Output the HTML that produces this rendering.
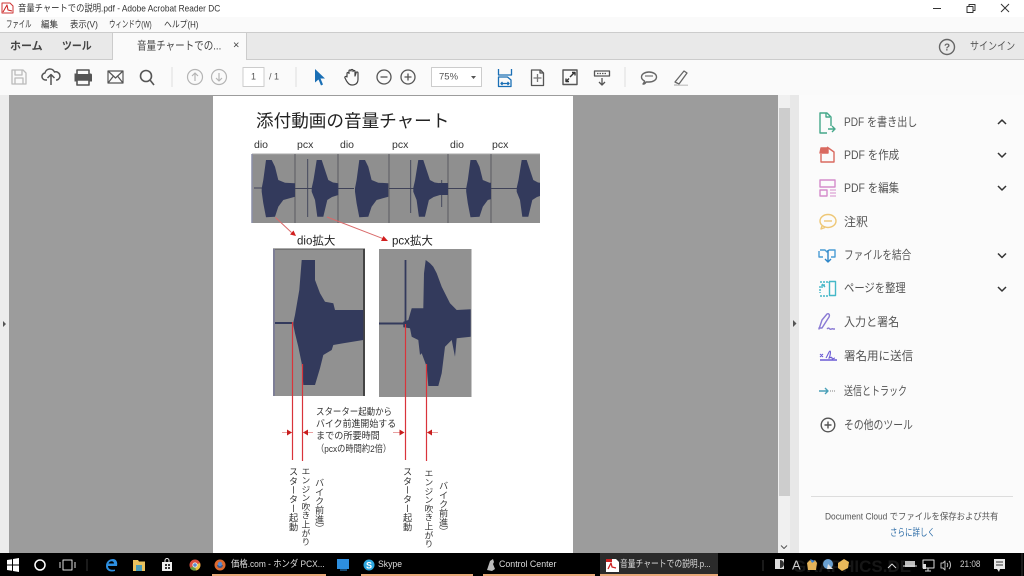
<!DOCTYPE html>
<html><head><meta charset="utf-8"><style>
*{margin:0;padding:0;box-sizing:border-box}
html,body{width:1024px;height:576px;overflow:hidden;background:#fff}
body{position:relative;font-family:"Liberation Sans","Noto Sans CJK JP",sans-serif;color:#444}
#w{position:absolute;left:0;top:0;width:1024px;height:576px;filter:blur(.3px)}
.a{position:absolute}
.t{position:absolute;white-space:nowrap;line-height:1;z-index:2;transform:translateY(-50%) scaleX(var(--s,1));transform-origin:0 50%}
.v{position:absolute;writing-mode:vertical-rl;white-space:nowrap;line-height:1;color:#333;font-size:9.2px;transform:translateX(-50%);z-index:2}
.p{font-size:12px;color:#555;left:844px}
svg{position:absolute;left:0;top:0}
</style></head><body><div id="w">
<div class="a" style="left:0;top:17px;width:1024px;height:16px;background:#fafafa"></div>
<div class="a" style="left:0;top:32px;width:1024px;height:28px;background:#e9e9e9;border-top:1px solid #ccc;border-bottom:1px solid #ccc"></div>
<div class="a" style="left:112px;top:32px;width:135px;height:29px;background:#fafafa;border:1px solid #ccc;border-width:1px 1px 0 1px"></div>
<div class="a" style="left:0;top:60px;width:1024px;height:35px;background:#fafafa"></div>
<div class="a" style="left:0;top:95px;width:799px;height:458px;background:#9c9c9c"></div>
<div class="a" style="left:0;top:95px;width:9px;height:458px;background:#ececec"></div>
<div class="a" style="left:213px;top:96px;width:360px;height:457px;background:#fff"></div>
<div class="a" style="left:778px;top:95px;width:12px;height:458px;background:#f0f0f0"></div>
<div class="a" style="left:779px;top:108px;width:11px;height:388px;background:#cdcdcd"></div>
<div class="a" style="left:790px;top:95px;width:9px;height:458px;background:#e8e8e8"></div>
<div class="a" style="left:799px;top:95px;width:225px;height:458px;background:#fbfbfb"></div>
<div class="a" style="left:811px;top:496px;width:202px;height:1px;background:#ddd"></div>
<div class="a" style="left:0;top:553px;width:1024px;height:23px;background:#000"></div>
<div class="a" style="left:600px;top:553px;width:118px;height:23px;background:#2b2b2b"></div>
<div class="a" style="left:212px;top:574px;width:114px;height:2px;background:#e8a878"></div>
<div class="a" style="left:361px;top:574px;width:112px;height:2px;background:#e8a878"></div>
<div class="a" style="left:483px;top:574px;width:112px;height:2px;background:#e8a878"></div>
<div class="a" style="left:600px;top:574px;width:118px;height:2px;background:#e8a878"></div>

<div class="t" style="left:18px;top:9px;font-size:9.5px;color:#333;--s:.875">音量チャートでの説明.pdf - Adobe Acrobat Reader DC</div>
<div class="t" style="left:6px;top:25px;font-size:9.5px;color:#333;--s:.67">ファイル</div>
<div class="t" style="left:41px;top:25px;font-size:9px;color:#333;--s:.95">編集</div>
<div class="t" style="left:70px;top:25px;font-size:9px;color:#333;--s:.93">表示(V)</div>
<div class="t" style="left:109px;top:25px;font-size:9.5px;color:#333;--s:.68">ウィンドウ(W)</div>
<div class="t" style="left:164px;top:25px;font-size:9px;color:#333;--s:.87">ヘルプ(H)</div>
<div class="t" style="left:10px;top:47px;font-size:11px;font-weight:bold;color:#444">ホーム</div>
<div class="t" style="left:62px;top:47px;font-size:11px;font-weight:bold;color:#444;--s:.9">ツール</div>
<div class="t" style="left:137px;top:47px;font-size:11.5px;color:#444;--s:.83">音量チャートでの...</div>
<div class="t" style="left:233px;top:46px;font-size:11px;color:#444">×</div>
<div class="t" style="left:970px;top:47px;font-size:11px;color:#555;--s:.82">サインイン</div>
<div class="t" style="left:251px;top:77px;font-size:9px;color:#555">1</div>
<div class="t" style="left:269px;top:77px;font-size:9px;color:#555">/ 1</div>
<div class="t" style="left:439px;top:77px;font-size:9.5px;color:#555">75%</div>

<svg width="1024" height="576" viewBox="0 0 1024 576" fill="none" stroke-linejoin="round">
<g stroke="#333" stroke-width="1">
<path d="M933 8.5h8"/><path d="M967 6.5h6v6h-6zM969 6.5v-2h6v6h-2"/><path d="M1001 4l8 8M1009 4l-8 8"/></g>
<path d="M2 3h8l3 3v7H2z" fill="#fff" stroke="#c33"/><path d="M3 12l4-7 1 5 4 1" stroke="#c22"/>
<g stroke="#bbb" stroke-width="1.3"><path d="M12 70h11l3 3v11H12zM15 70v5h7v-5M15 84v-6h8v6"/></g>
<g stroke="#555" stroke-width="1.5"><path d="M47 80h-1a3.500 3.500 0 0 1-1-7 5 5 0 0 1 9.500-1 4 4 0 0 1 2.500 8h-1M51 85v-10M47.500 78l3.500-3.500 3.500 3.500"/></g>
<path d="M75 74h16a1.500 1.500 0 0 1 1.500 1.500V82H75z" fill="#555" transform="translate(-.5 -.5)"/>
<path d="M77 74v-4h12v4M77 80h12v5H77z" stroke="#555" stroke-width="1.6" fill="#fafafa"/>
<g stroke="#555" stroke-width="1.200"><path d="M108 71h15v12h-15zM108 71l7.500 7 7.500-7M108 83l5.500-7M123 83l-5.500-7"/></g>
<g stroke="#555" stroke-width="1.600"><circle cx="146" cy="76" r="5.500"/><path d="M150 80l4 5"/></g>
<path d="M172 67v20M296 67v20M625 67v20" stroke="#ddd"/>
<g stroke="#b5b5b5" stroke-width="1.200"><circle cx="195" cy="77" r="7.500"/><path d="M195 81v-8M192 76l3-3 3 3"/><circle cx="219" cy="77" r="7.500"/><path d="M219 73v8M216 78l3 3 3-3"/></g>
<rect x="243" y="67.500" width="21" height="19" fill="#fff" stroke="#ccc"/>
<rect x="431.500" y="67.500" width="50" height="19" fill="#fff" stroke="#ccc"/>
<path d="M471 76h5l-2.500 3z" fill="#555"/>
<path d="M315 69l10 9.500h-4.500l2.500 6-2 1-2.500-6-3.500 3z" fill="#1a6fb5"/>
<g stroke="#444" stroke-width="1.200"><path d="M347 77v-3.500a1 1 0 0 1 2 0V71a1 1 0 0 1 2 0v-.5a1 1 0 0 1 2 0v1a1 1 0 0 1 2 0V76l1-3a1 1 0 0 1 2 0v6c0 4-2 6-6 6-3 0-4-2-5.500-4l-1.500-3a1 1 0 0 1 2-1z" fill="#fafafa"/></g>
<g stroke="#555" stroke-width="1.300"><circle cx="384" cy="77" r="7"/><path d="M380.500 77h7"/><circle cx="408" cy="77" r="7"/><path d="M404.500 77h7M408 73.500v7"/></g>
<g stroke="#1a6fb5" stroke-width="1.300"><path d="M498.500 69v6h13v-6M498.500 86.500v-9.500h9l3.500 3v6.500zM501 83.500h8M502.500 82l-1.500 1.500 1.500 1.500M507.500 82l1.500 1.500-1.500 1.500"/></g>
<g stroke="#555" stroke-width="1.300"><path d="M531.500 70h9l3 3v12.500h-12zM540 70v3h3"/><path d="M537.500 74v8M533.500 78h8" stroke="#777"/></g>
<g stroke="#555" stroke-width="1.400"><path d="M563 70h14v14.500h-14z"/><path d="M570 77l4-4M572 72.500h3v3" stroke="#333"/><path d="M566 81.500l3-3M566 78.500v3h3" stroke="#333"/></g>
<g stroke="#555" stroke-width="1.300"><path d="M594.500 71h15v5h-15z"/><path d="M602 78v7M599 82l3 3 3-3"/><path d="M597 73.500h10" stroke-dasharray="1.500 1"/></g>
<g stroke="#666" stroke-width="1.400"><path d="M643 84c1-1 1.500-2 1.500-3-2-1-3-2.500-3-4 0-3 3.500-5 7.500-5s7.500 2 7.500 5-3.500 5-7.500 5c-1 0-2 0-3 0-.5 1-1.500 2-2.500 2z"/><path d="M645 76h8" stroke="#888"/></g>
<path d="M675 82l9-11 3 2-8 11zM674 85h3" stroke="#666" stroke-width="1.300"/>
<path d="M674 84.500h14v1.500h-14z" fill="#ccc"/>
<circle cx="947" cy="47" r="7.500" stroke="#666" stroke-width="1.400"/>
<text x="947" y="50.500" font-size="10" fill="#666" text-anchor="middle" font-weight="bold" font-family="Liberation Sans">?</text>
<path d="M3 321v6l3-3zM793 320v7l3.500-3.500z" fill="#555"/>
<path d="M781 545.500l3 3 3-3" stroke="#555"/>

<rect x="252" y="154" width="288" height="69" fill="#8f8f8f"/>
<path d="M252 154h288" stroke="#aaa"/>
<path d="M252 154v69" stroke="#8b8fa8" stroke-width="1.500"/>
<path d="M295 154v69M338 154v69M389 154v69M448 154v69M491 154v69" stroke="#4e4e55" stroke-width=".8"/>
<defs>
<polygon id="dw" fill="#333a5c" points="261.700,188.300 263.300,180 266,160 271.700,160 275,166.700 278.300,180 285,182.700 295,183.300 295,196.700 283.300,200 278.300,206.700 275,216.700 266,217.300 263.300,203.300 261.700,191.700"/>
<polygon id="pw" fill="#333a5c" points="311.700,188 313.500,180 316.700,160 321.700,160 325,170 328.300,180 333,182.500 338.300,183.300 338.300,195 332,197 327.300,200 323.300,216.700 317.300,216.700 315,200 311.700,191.700"/>
<clipPath id="c1"><rect x="448" y="150" width="43" height="80"/></clipPath>
<clipPath id="c2"><rect x="491" y="150" width="49" height="80"/></clipPath>
</defs>
<g stroke="#3f4258" stroke-width=".9">
<path d="M254 188h8M295 188.500h17M338 188.500h16M389 188.500h28M448 188.500h19M491 188.500h26"/>
<path d="M307.700 159v58M410.700 160v53M441.700 180v27"/>
</g>
<use href="#dw"/>
<use href="#pw"/>
<use href="#dw" x="93.300"/>
<use href="#pw" x="101.600"/>
<rect x="439" y="183" width="9" height="12" fill="#333a5c"/>
<g clip-path="url(#c1)"><use href="#dw" x="204.500"/></g>
<g clip-path="url(#c2)"><use href="#pw" x="205"/></g>
<g stroke="#d96a6a"><path d="M275.500 217.500l16 15M327 217l57 22"/></g>
<path d="M296 236l-6-1.500 3.500-4zM388 241l-7 0 2.500-5z" fill="#d21f1f"/>

<rect x="273" y="249" width="92" height="147" fill="#919191"/>
<path d="M273 249h92" stroke="#555"/>
<rect x="273" y="249" width="2" height="147" fill="#7d7e96"/>
<rect x="363" y="249" width="2" height="147" fill="#444"/>
<path d="M275 322h18v2h-18z" fill="#333a5c"/>
<polygon fill="#333a5c" points="293.300,322.700 295,315 299.300,290 301.700,260 315,260 315,280 320,293.300 325,301.700 333.300,303.300 335,310 363.300,310 363.300,340 343.300,343.300 333.300,345 331.700,350 323.300,355 320,368.300 315,385 303.300,385 301.700,363.300 298.300,346.700 295,333.300 293.300,325"/>
<rect x="379" y="249" width="92.500" height="148" fill="#919191"/>
<path d="M379 323.500h26" stroke="#333a5c" stroke-width="2"/>
<path d="M405.500 260v63" stroke="#333a5c" stroke-width="1.800"/>
<polygon fill="#333a5c" points="403.300,321.700 408.300,320 411.700,308.300 423.300,308.300 424,273.300 425.700,260 430,263.300 433.300,266.700 436.700,273.300 441.700,286.700 446.700,296.700 450,303.300 456.700,310 470.700,309.300 470.700,336.700 456.700,338.300 455,356.700 451.700,340 445,346.700 441.700,373.300 438.300,386 428.300,386 426.700,366.700 421.700,353.300 420,355 418.300,340 411.700,336.700 410,328.300 403.300,327.300"/>
<g stroke="#d9343b" stroke-width="1.200">
<path d="M292.500 322v138M302.500 364v97M405.500 324v136M426.500 364v97"/>
</g>
<g stroke="#e8a0a0" stroke-width="1"><path d="M282 432.500h10M303 432.500h10M393 432.500h11M427 432.500h11"/></g>
<path d="M292 432.500l-5-3v6zM303 432.500l5-3v6zM404.500 432.500l-5-3v6zM427 432.500l5-3v6z" fill="#c81e1e"/>
<g stroke-width="1.400">
<path d="M831 126v-9l-4-4h-7v20h7" stroke="#45a88a"/><path d="M826 113v4h4M828 129h6M832 126l3 3-3 3" stroke="#45a88a"/>
<path d="M827 147l7 5v10h-13v-8" stroke="#d96a60"/><path d="M821 148h7v5h-8z" fill="#d96a60" stroke="#d96a60"/>
<path d="M820 180h15v7h-15zM820 190h7v6h-7z" stroke="#d48ccb"/><path d="M830 190h6M830 193h6M830 196h6" stroke="#d48ccb" stroke-width=".9"/>
<ellipse cx="828" cy="221" rx="8" ry="6.500" stroke="#eec776"/><path d="M824 221h8" stroke="#eec776"/><path d="M822 226l-1 3 4-1.500" stroke="#eec776"/>
<path d="M820 250h5l2 2 2-2h6v7h-4M823 257h-4v-6" stroke="#4a9cd4"/><path d="M828 250v12M825 259l3 3 3-3" stroke="#2e86c8"/>
<path d="M820 282h9v1M820 296h9M820 286v7" stroke="#45b8c8" stroke-dasharray="2 1"/><rect x="829.500" y="281.500" width="6" height="14" stroke="#45b8c8"/><path d="M822 284l3 3M822 288v-3h3" stroke="#45b8c8"/>
<path d="M819 329l3-9 5-6c2-1 3 1 2 3l-7 11h-3zM827 329c2-2 2 0 3 0 1 1 2-1 3 0h2" stroke="#8a7ad4"/>
<path d="M820 360h17" stroke="#6a5ad4"/><path d="M820 354l3 3M823 354l-3 3M826 358c2-3 3-7 4-7s0 6-1 7 3-2 3 0 2 0 3 0" stroke="#6a5ad4" stroke-width="1.100"/>
<path d="M819 391h9M825 388l3 3-3 3" stroke="#4aa0b8"/><path d="M830 391h6" stroke="#aaa" stroke-dasharray="1 1"/>
<circle cx="828" cy="425" r="6.800" stroke="#555"/><path d="M824.500 425h7M828 421.500v7" stroke="#555"/>
</g>
<g stroke="#333" stroke-width="1.500">
<path d="M998 124l4-4 4 4M998 153l4 4 4-4M998 186l4 4 4-4M998 253.500l4 4 4-4M998 287l4 4 4-4"/>
</g>
<text x="793" y="572" font-size="17" font-weight="bold" fill="#161616" font-family="Liberation Sans">GRAPHICS.DE</text>
<path d="M7 560l5-.8v5.300H7zM13 559l6-1v6.500h-6zM7 565.500h5v5.300l-5-.8zM13 565.500h6v6.500l-6-1z" fill="#fff"/>
<circle cx="40" cy="565" r="5" stroke="#fff" stroke-width="1.500"/>
<path d="M63 560h9v10h-9zM60 562v6M75 562v6" stroke="#ddd"/>
<path d="M87 559v12" stroke="#333"/>
<path d="M117 566h-9c0 3 3 4.500 7 3.500v1.500c-5 1.500-9-.5-9-5 0-5 4-7 7-7 3 0 5 3 4 7zM108.500 563.500h5.500c0-3-4.500-3-5.500 0z" fill="#2d8fe0"/>
<path d="M133 560h5l1 1.500h6V571h-12z" fill="#e9c25e"/><path d="M136 565h6v6h-6z" fill="#4a9cb8"/>
<path d="M162 562h10v9h-10z" fill="#eee"/><path d="M165 562v-1.500a2 2 0 0 1 4 0V562" stroke="#eee"/><path d="M165 564h2v2h-2zM168 564h2v2h-2zM165 567h2v2h-2zM168 567h2v2h-2z" fill="#333"/>
<circle cx="195" cy="565" r="5.500" fill="#dd5040"/><path d="M195 565l-5 3a5.500 5.500 0 0 0 6 2.500z" fill="#6a9a40"/><path d="M195 565l5 -2a5.500 5.500 0 0 1-4 7.500z" fill="#e8c040"/><circle cx="195" cy="565" r="2.200" fill="#5a8ad0" stroke="#eee" stroke-width=".8"/>
<circle cx="220" cy="565" r="5.500" fill="#dd6a30"/><path d="M217 565a3 3 0 0 0 6 0z" fill="#3a5a90"/><circle cx="220" cy="564" r="2.200" fill="#5a8ad0"/>
<path d="M337 559h12v10h-12z" fill="#2d8fe0"/><path d="M340 570h7" stroke="#2d8fe0"/>
<circle cx="369" cy="565" r="5.500" fill="#2da8e0"/>
<text x="369" y="568.500" font-size="9" fill="#fff" text-anchor="middle" font-weight="bold" font-family="Liberation Sans">S</text>
<path d="M487 570l3-9 3-2 1 3-1 2 2 5-3 2z" fill="#bbb"/>
<path d="M606 559h10l3 3v10h-13z" fill="#fff"/><path d="M608 569l3-6 1 4 4 1" stroke="#c22" stroke-width="1.300"/><path d="M606 559h6v3h-6z" fill="#c22"/>
<path d="M763 560v11" stroke="#333"/>
<rect x="775" y="559" width="9" height="10" fill="#ddd"/><path d="M780 560a4 4 0 0 1 0 8z" fill="#333"/>
<path d="M807 563l3-3 2 2 3-2 2 3-1 7h-8z" fill="#e2b25a"/><path d="M810 559l5 2-3 2z" fill="#3a80d0"/>
<circle cx="828" cy="564" r="5" fill="#6aa0d0"/><path d="M828 564l5 5h-6z" fill="#ddd"/>
<path d="M838 563l6-4 5 3-1 6-6 3-4-3z" fill="#e8b85a"/>
<path d="M888 568l4-4 4 4" stroke="#ddd"/>
<path d="M905 561h10v6h-10z" fill="#bbb"/><path d="M903 566h14" stroke="#ddd"/>
<path d="M923 560h11v8h-11zM928 568v3M925 571h6" stroke="#ddd"/><path d="M923 564h3v5h-3z" fill="#ddd"/>
<path d="M941 563h2l2-2v9l-2-2h-2zM947 563c1 1 1 3 0 4M949 561c2 2 2 6 0 8" stroke="#bbb"/>
<path d="M994 559h11v10h-5l-1 3-2-3h-3z" fill="#e8e8e8"/><path d="M996 562h7M996 565h7" stroke="#333"/>
<path d="M1022 553v23" stroke="#333"/>
</svg>

<div class="t" style="left:256px;top:121.500px;font-size:17.600px;color:#222">添付動画の音量チャート</div>
<div class="t" style="left:254px;top:145px;font-size:10.500px;color:#333">dio</div>
<div class="t" style="left:297px;top:145px;font-size:10.500px;color:#333">pcx</div>
<div class="t" style="left:340px;top:145px;font-size:10.500px;color:#333">dio</div>
<div class="t" style="left:392px;top:145px;font-size:10.500px;color:#333">pcx</div>
<div class="t" style="left:450px;top:145px;font-size:10.500px;color:#333">dio</div>
<div class="t" style="left:492px;top:145px;font-size:10.500px;color:#333">pcx</div>
<div class="t" style="left:297px;top:242px;font-size:11.500px;color:#222">dio拡大</div>
<div class="t" style="left:392px;top:242px;font-size:11.500px;color:#222">pcx拡大</div>
<div class="t" style="left:316px;top:413px;font-size:9.600px;color:#333;--s:.88">スターター起動から</div>
<div class="t" style="left:316px;top:425px;font-size:9.600px;color:#333;--s:.93">バイク前進開始する</div>
<div class="t" style="left:316px;top:437px;font-size:9.600px;color:#333;--s:.95">までの所要時間</div>
<div class="t" style="left:316px;top:450px;font-size:9.600px;color:#333;--s:.86">（pcxの時間約2倍）</div>
<div class="v" style="left:292px;top:467px">スターター起動</div>
<div class="v" style="left:305px;top:467px;font-size:8.800px">エンジン吹き上がり</div>
<div class="v" style="left:318px;top:478px">バイク前進）</div>
<div class="v" style="left:406px;top:467px">スターター起動</div>
<div class="v" style="left:428px;top:469px;font-size:8.800px">エンジン吹き上がり</div>
<div class="v" style="left:442px;top:481px">バイク前進）</div>

<div class="t p" style="top:121.500px;--s:.84">PDF を書き出し</div>
<div class="t p" style="top:154.500px;--s:.87">PDF を作成</div>
<div class="t p" style="top:187.500px;--s:.87">PDF を編集</div>
<div class="t p" style="top:221.500px">注釈</div>
<div class="t p" style="top:255px;--s:.8">ファイルを結合</div>
<div class="t p" style="top:288px;--s:.86">ページを整理</div>
<div class="t p" style="top:322px;--s:.92">入力と署名</div>
<div class="t p" style="top:356px;--s:.96">署名用に送信</div>
<div class="t p" style="top:391px;--s:.75">送信とトラック</div>
<div class="t p" style="top:425px;--s:.82">その他のツール</div>
<div class="t" style="left:825px;top:517px;font-size:9.300px;color:#555;--s:.9">Document Cloud でファイルを保存および共有</div>
<div class="t" style="left:890px;top:533.500px;font-size:10px;color:#2f6ea8;--s:.75">さらに詳しく</div>

<div class="t" style="left:231px;top:565px;font-size:9.600px;color:#ddd;--s:.87">価格.com - ホンダ PCX...</div>
<div class="t" style="left:378px;top:565px;font-size:9.600px;color:#ddd;--s:.9">Skype</div>
<div class="t" style="left:499px;top:565px;font-size:9.600px;color:#ddd;--s:.92">Control Center</div>
<div class="t" style="left:620px;top:565px;font-size:9.600px;color:#ddd;--s:.81">音量チャートでの説明.p...</div>
<div class="t" style="left:792px;top:565px;font-size:13px;color:#ccc">A</div>
<div class="t" style="left:960px;top:565px;font-size:9.600px;color:#ccc;--s:.85">21:08</div>
</div></body></html>
